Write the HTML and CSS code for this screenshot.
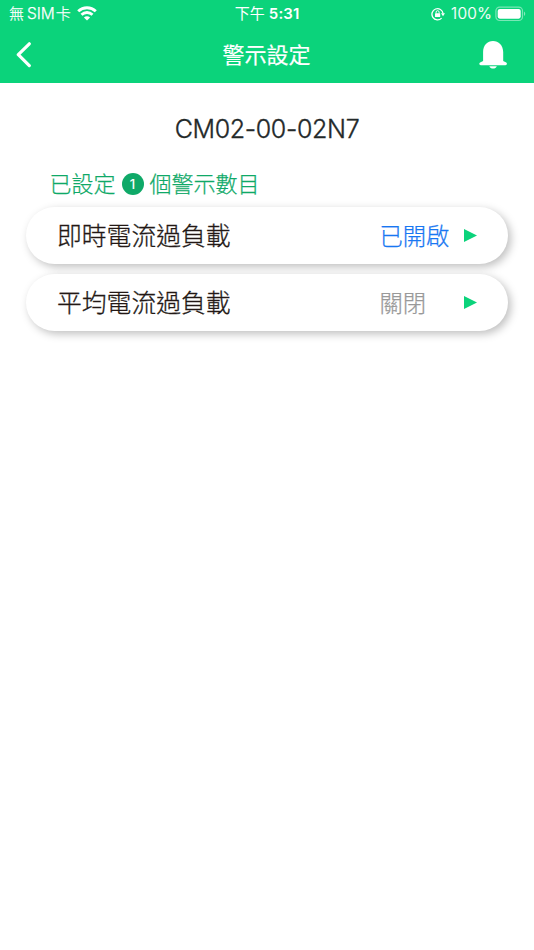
FILE: index.html
```html
<!DOCTYPE html>
<html lang="zh-Hant">
<head>
<meta charset="utf-8">
<title>警示設定</title>
<link rel="stylesheet" href="styles.css">
</head>
<body>
<header class="top">
  <div class="status">
    <div class="status-left">
      <span class="carrier">無<span class="sim">SIM</span>卡</span>
      <svg class="wifi" width="20" height="15" viewBox="0 0 20 15" fill="none" stroke="#fff" stroke-width="2.9">
        <path d="M1.2 5.2C6.2.5 13.8.5 18.8 5.2"/>
        <path d="M4.5 8.7c3.2-2.9 7.8-2.9 11 0"/>
        <path d="M6.9 11.6c1.8-1.7 4.4-1.7 6.2 0L10 14.6z" fill="#fff" stroke="none"/>
      </svg>
    </div>
    <div class="time">下午 <b>5:31</b></div>
    <div class="status-right">
      <svg width="14" height="14" viewBox="0 0 14 14" fill="none" stroke="#fff">
        <path d="M10.6 11.1A5.6 5.6 0 1 1 12.1 6.5" stroke-width="1.3"/>
        <path d="M10 6.2h4l-2 3z" fill="#fff" stroke="none"/>
        <rect x="4" y="6.3" width="5.2" height="3.8" rx=".5" fill="#fff" stroke="none"/>
        <path d="M5.1 6.5V5.2a1.5 1.5 0 0 1 3 0v1.3" stroke-width="1"/>
      </svg>
      <span class="percent">100%</span>
      <svg class="battery" width="31" height="16" viewBox="0 0 31 16">
        <rect x=".9" y="1.1" width="26.6" height="13.4" rx="3.7" fill="none" stroke="#fff" stroke-opacity=".45" stroke-width="1.2"/>
        <rect x="2.7" y="3" width="23" height="9.7" rx="2.1" fill="#fff"/>
        <path d="M29 5.5c1.7.7 1.7 3.8 0 4.5z" fill="#fff" fill-opacity=".5"/>
      </svg>
    </div>
  </div>
  <nav class="nav">
    <svg class="back" width="16" height="26" viewBox="0 0 16 26" fill="none" stroke="#fff" stroke-width="3.2" stroke-linecap="round" stroke-linejoin="round"><path d="M13.3 1.8L2.3 12.7l11 10.9"/></svg>
    <h1 class="title">警示設定</h1>
    <svg class="bell" width="28" height="28" viewBox="0 0 28 28" fill="#fff">
      <path d="M4.1 20V11C4.1 4.4 8.4 0 14 0S24.2 4.4 24.2 11v9l3 1.5c1.2.8.8 2.7-.8 2.7H1.8c-1.6 0-2-1.9-.7-2.7z"/>
      <path d="M10.3 25.3h7.5c-.6 1.6-2 2.3-3.7 2.3s-3.2-.7-3.8-2.3z"/>
    </svg>
  </nav>
</header>
<main class="content">
  <h2 class="device">CM02-00-02N7</h2>
  <p class="summary"><span>已設定</span><span class="count">1</span><span>個警示數目</span></p>
  <ul class="list">
    <li class="item"><span class="name">即時電流過負載</span><span class="state on">已開啟</span><svg width="13" height="13" viewBox="0 0 13 13" fill="#0bd37b"><path d="M0 0l13 6.5L0 13z"/></svg></li>
    <li class="item"><span class="name">平均電流過負載</span><span class="state">關閉</span><svg width="13" height="13" viewBox="0 0 13 13" fill="#0bd37b"><path d="M0 0l13 6.5L0 13z"/></svg></li>
  </ul>
</main>
</body>
</html>
```
FILE: styles.css
```css
* { box-sizing: border-box; }
body {
  margin: 0;
  min-height: 950px;
  background: #fff;
  font-family: Inter, "Noto Sans CJK TC", sans-serif;
  font-weight: 300;
}
h1, h2, p, ul { margin: 0; padding: 0; font-weight: inherit; }
svg { display: block; flex: none; }
.top { height: 83px; background: #0bd37b; color: #fff; }
.status {
  display: grid;
  grid-template-columns: 1fr auto 1fr;
  align-items: center;
  height: 28px;
  padding: 0 8px 0 9px;
  font-size: 15px;
  line-height: 28px;
  font-weight: 400;
}
.status-left, .status-right { display: flex; align-items: center; }
.status-left { gap: 6px; }
.carrier { font-weight: 300; -webkit-text-stroke: .25px; }
.sim { margin: 0 1px 0 3px; font-size: 15.5px; font-weight: 300; }
.wifi { margin-top: -2px; }
.time { margin-left: -1px; }
.time b { font-weight: 600; letter-spacing: .1px; }
.status-right { justify-content: flex-end; }
.percent { margin: 0 3px 0 6px; font-size: 15.5px; font-weight: 300; letter-spacing: .3px; -webkit-text-stroke: .2px; }
.battery { margin-top: -1px; }
.nav {
  display: grid;
  grid-template-columns: 1fr auto 1fr;
  align-items: center;
  height: 54px;
  padding: 0 27px 0 16px;
}
.title { margin-left: 10px; font-size: 22px; line-height: 54px; font-weight: 400; -webkit-text-stroke: .2px; }
.bell { justify-self: end; }
.content { padding: 29px 26px 0; }
.device { font-size: 25px; line-height: 34px; font-weight: 300; letter-spacing: -.35px; text-align: center; color: #232929; -webkit-text-stroke: .35px; }
.summary {
  display: flex;
  align-items: center;
  height: 32px;
  margin: 22px 0 7px 23.5px;
  font-size: 22px;
  line-height: 28px;
  color: #0fa968;
  -webkit-text-stroke: .25px;
}
.count {
  width: 22px;
  height: 22px;
  margin: 0 6px;
  border-radius: 50%;
  background: #0fa968;
  color: #fff;
  font-size: 13px;
  line-height: 22px;
  font-weight: 500;
  text-align: center;
  -webkit-text-stroke: 0;
}
.list { display: grid; gap: 10px; list-style: none; }
.item {
  display: grid;
  grid-template-columns: 1fr 84.5px 13px;
  align-items: center;
  height: 57px;
  padding: 0 31px;
  border-radius: 29px;
  background: #fff;
  box-shadow: 3px 3px 8px rgba(0, 0, 0, .25);
}
.name { padding-bottom: 3px; font-size: 24.8px; color: #231815; -webkit-text-stroke: .3px; }
.state { padding-bottom: 2px; font-size: 23.3px; color: #999; -webkit-text-stroke: .25px; }
.state.on { color: #1877f2; }
```
